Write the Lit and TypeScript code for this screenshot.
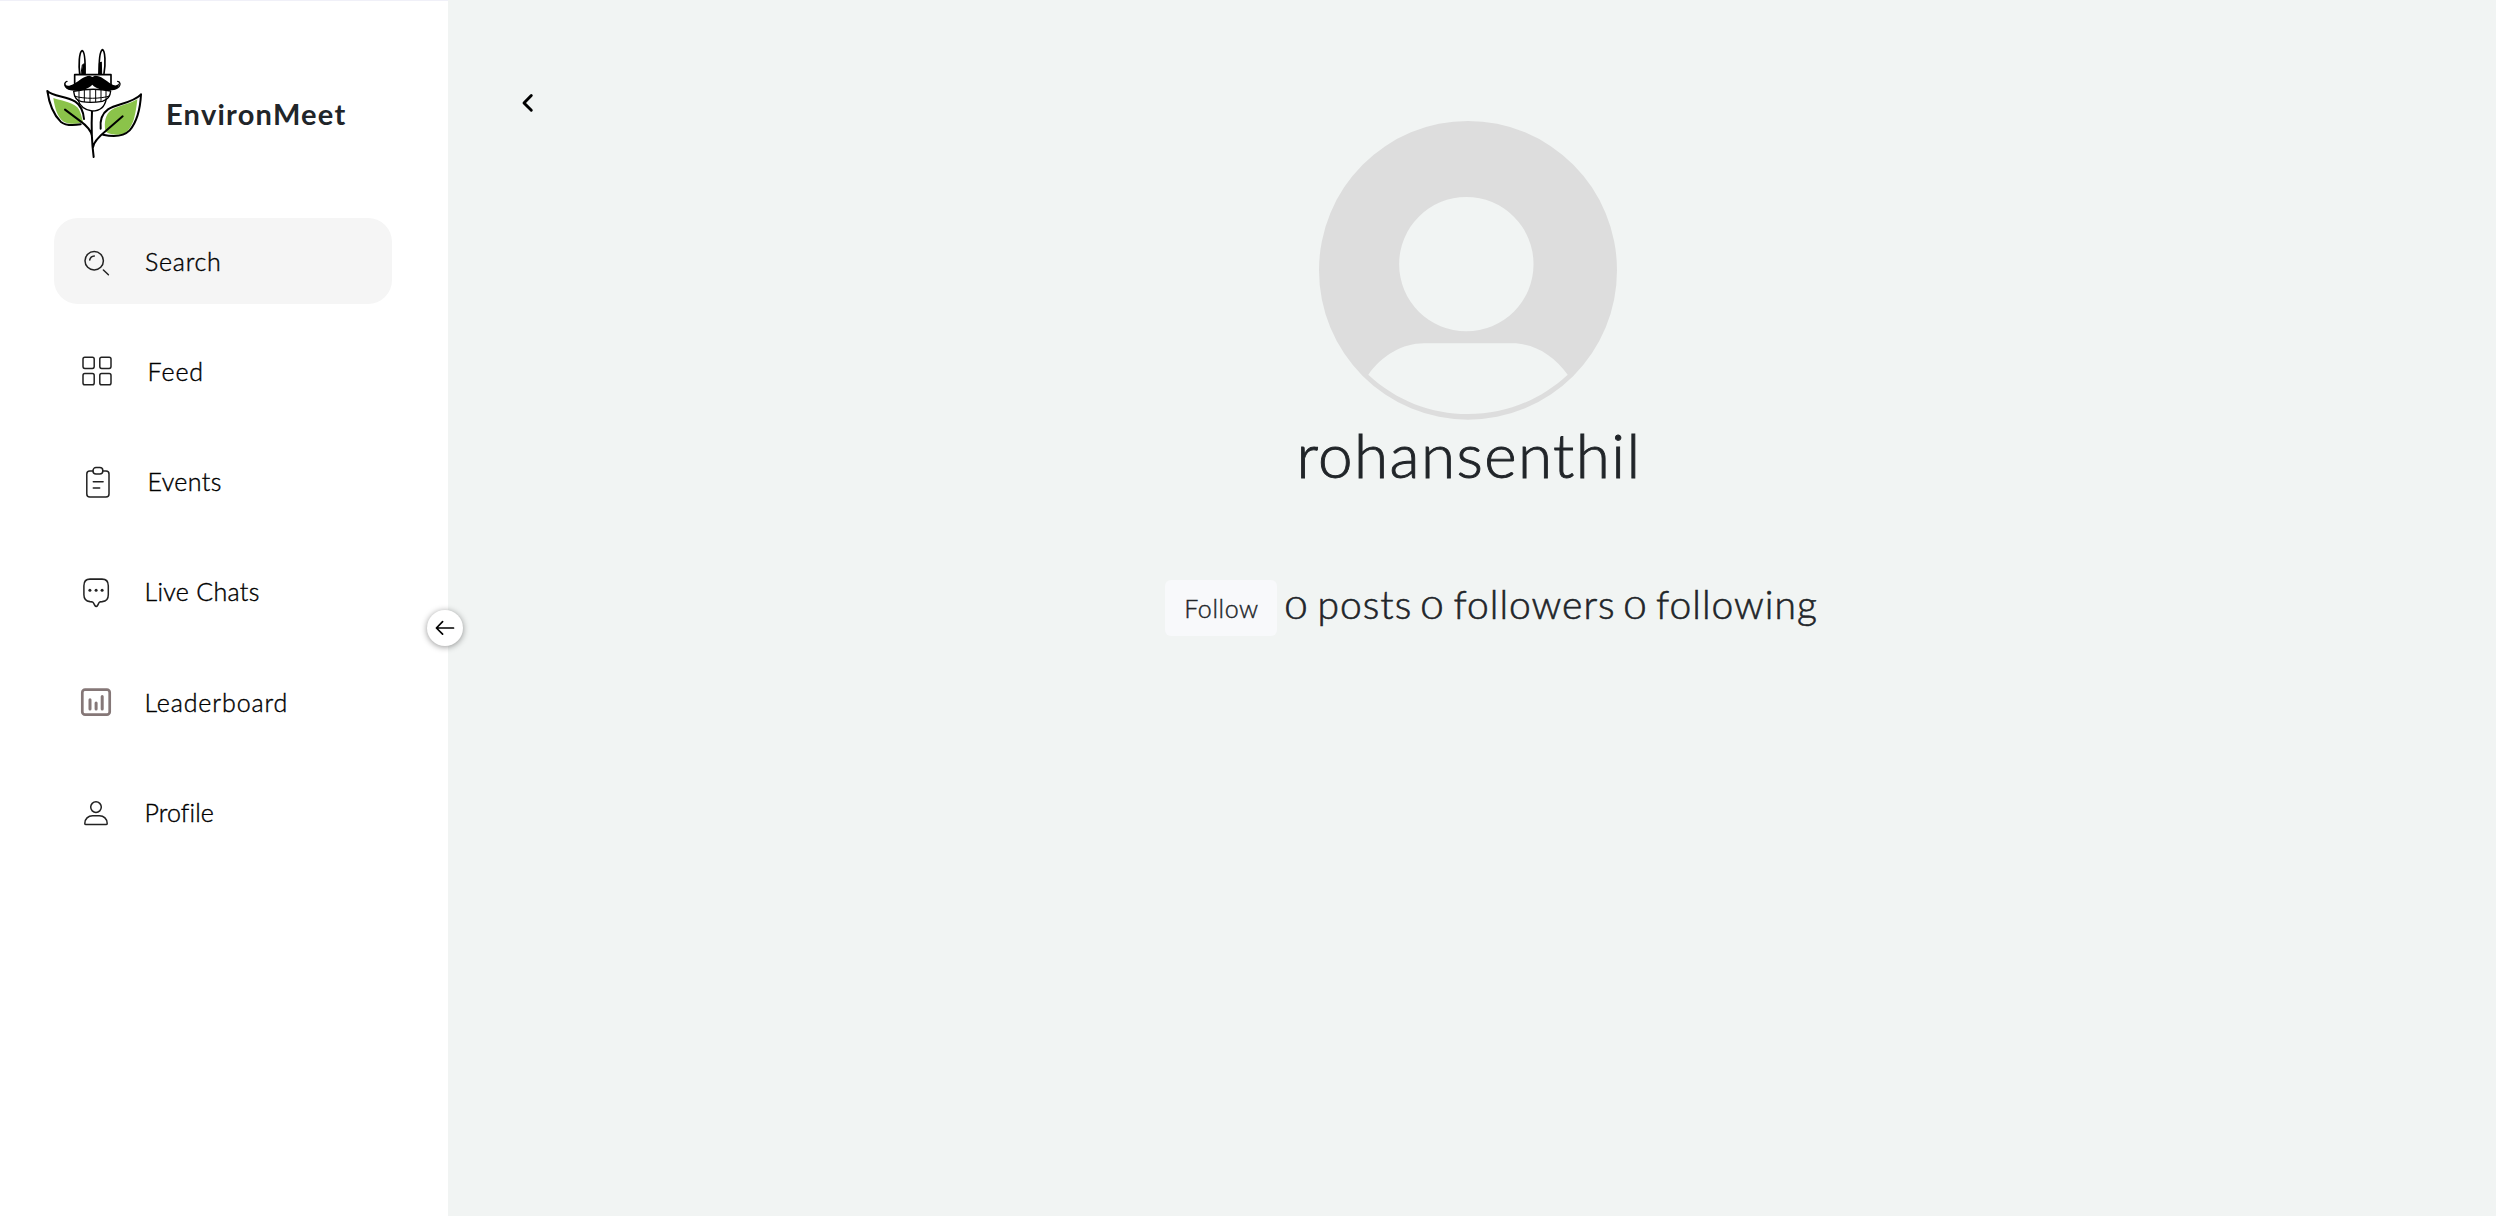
import { LitElement, html, css, svg } from "lit";
import { classMap } from "lit/directives/class-map.js";
import { styleMap } from "lit/directives/style-map.js";

const icons = {
  search: svg`<g stroke-width="1.5" transform="translate(1 -0.2)"><circle cx="19.2" cy="19" r="9.2"/><path d="M14.7 18.2a5 5 0 0 1 4.6-4M28.4 28.2l5 4.8"/></g>`,
  feed: svg`<g stroke-width="1.5" transform="translate(1.2 -0.2)"><rect x="7.8" y="5.4" width="11.2" height="11.2" rx="1.8"/><rect x="24.6" y="5.4" width="11.2" height="11.2" rx="1.8"/><rect x="7.8" y="21.8" width="11.2" height="11.2" rx="1.8"/><rect x="24.6" y="21.8" width="11.2" height="11.2" rx="1.8"/></g>`,
  events: svg`<g stroke-width="1.5" transform="translate(1.1 1)"><path d="M17.9 8.1h-3.2a3 3 0 0 0-3 3v20a3 3 0 0 0 3 3h16.2a3 3 0 0 0 3-3v-20a3 3 0 0 0-3-3h-3.2"/><rect x="17.9" y="4.6" width="9.8" height="6.5" rx="3"/><path d="M18.2 18.7h9.8M18.2 25h6.4"/></g>`,
  chats: svg`<g stroke-width="1.5" transform="translate(0 0.9) scale(1 1.06)"><path d="M16 5.9h12q6.3 0 6.3 6.3v8.4q0 6.1-6.1 6.5c-3.4 0-3 .6-4.4 3.2q-1.6 2.8-3.2 0c-1.5-2.6-1.2-3.2-4.6-3.2Q9.9 26.5 9.9 20.6v-8.4Q9.9 5.900 16 5.900z"/></g><g fill="#222" stroke="none"><circle cx="15.900" cy="18.300" r="1.500"/><circle cx="22.100" cy="18.300" r="1.500"/><circle cx="28.100" cy="18.300" r="1.500"/></g>`,
  board: svg`<g stroke="#857777"><rect x="8.300" y="6.700" width="27.400" height="25" rx="2.800" stroke-width="2.700"/><path d="M16 16.800v9.200M22.100 19.900v6.100M28.200 13.600v12.400" stroke-width="3"/></g>`,
  profile: svg`<g stroke-width="1.500" transform="translate(0 2.8)"><circle cx="22" cy="11.300" r="5.300"/><path d="M12 28.800c-.700 0-1.200-.400-1.200-1.200 0-4.400 3.400-7.700 7.800-7.700h6.800c4.400 0 7.800 3.300 7.800 7.700 0 .800-.500 1.200-1.200 1.200z"/></g>`,
};

const items = [
  { icon: icons.search, label: "Search", shift: 0.5, spacing: 0.75, active: true },
  { icon: icons.feed, label: "Feed", shift: 3, spacing: 0.9, active: false },
  { icon: icons.events, label: "Events", shift: 3, spacing: 0.4, active: false },
  { icon: icons.chats, label: "Live Chats", shift: 0, spacing: 0.3, active: false },
  { icon: icons.board, label: "Leaderboard", shift: 0, spacing: 0.88, active: false },
  { icon: icons.profile, label: "Profile", shift: 0, spacing: 0.1, active: false },
];

const stats = [
  { count: 0, label: "posts", width: 136 },
  { count: 0, label: "followers", width: 202.5 },
  { count: 0, label: "following", width: 200 },
];

class AppRoot extends LitElement {
  static styles = css`
    :host {
      display: block;
      font-family: Lato, "Open Sans", sans-serif;
      font-weight: 300;
      color: #212529;
    }
    * { box-sizing: border-box; }
    .page { display: flex; height: 1216px; background: #f1f4f3; overflow: hidden; }
    .sidebar {
      position: relative;
      flex: none;
      width: 448px;
      background: #fff;
      border-top: 1px solid #f0f0f8;
      padding: 29px 56px 0 30px;
    }
    .brand { display: flex; height: 188px; }
    .logo { width: 130px; height: 140px; flex: none; }
    .name { margin: 64px 0 0 6px; font-size: 29px; line-height: 40px; font-weight: 700; letter-spacing: 1.25px; }
    .nav { display: flex; flex-direction: column; gap: 24.7px; margin-left: 24px; }
    .item {
      display: flex;
      align-items: center;
      height: 85.5px;
      padding-left: 20px;
      border-radius: 24px;
      color: #000;
    }
    .item.active { background: #f5f5f5; }
    .icon { width: 44px; height: 44px; fill: none; stroke: #222; stroke-linecap: round; stroke-linejoin: round; flex: none; }
    .label { margin-left: 26.5px; font-size: 25px; line-height: 36px; -webkit-text-stroke: 0.4px currentColor; white-space: nowrap; }
    .toggle {
      position: absolute;
      left: 426.5px;
      top: 609px;
      width: 36px;
      height: 36px;
      border: 0;
      padding: 0;
      border-radius: 50%;
      background: #fff;
      box-shadow: 0 1px 6px rgba(0, 0, 0, 0.42);
    }
    .toggle svg { display: block; width: 36px; height: 36px; fill: none; stroke: #000; stroke-width: 1.7; stroke-linecap: round; stroke-linejoin: round; }
    .main { flex: 1; padding-top: 85px; }
    .back { display: block; width: 36px; height: 36px; margin-left: 62px; fill: none; stroke: #000; stroke-width: 2.9; stroke-linecap: round; stroke-linejoin: round; }
    .avatar { display: block; width: 300px; height: 300px; margin: -1px 0 0 870px; }
    .user { margin: -2px 0 0 848.5px; font-size: 62px; line-height: 72px; font-weight: 300; letter-spacing: 1.4px; -webkit-text-stroke: 0.9px currentColor; }
    .row { display: flex; align-items: flex-start; margin: 90px 0 0 717px; }
    .follow {
      width: 112px;
      height: 56px;
      border: 0;
      border-radius: 6px;
      padding: 0 0 0 1px;
      background: #f8f9fb;
      color: #212529;
      font: 300 25px/56px Lato, sans-serif;
      letter-spacing: 0.6px;
      -webkit-text-stroke: 0.4px currentColor;
    }
    .stats { display: flex; margin-left: 8px; }
    .stat { display: flex; align-items: baseline; font-size: 39px; line-height: 48px; letter-spacing: 1px; -webkit-text-stroke: 0.6px currentColor; }
    .count { display: block; width: 32.5px; font-size: 31.5px; letter-spacing: 0; transform: scaleX(1.2); transform-origin: 0 50%; }
  `;

  render() {
    return html`
      <div class="page">
        <aside class="sidebar">
          <div class="brand">
            <svg class="logo" viewBox="0 0 390 420" fill="none" stroke="#000" stroke-width="6" stroke-linecap="round" stroke-linejoin="round">
              <g fill="#8bc34a" stroke="none">
                <path d="M70 204c22 8 52 10 72 28 10 12 13 30 17 44-14 7-40 8-58-1-20-14-27-44-31-71z"/>
                <path d="M322 208c-22 14-55 18-78 32-18 12-22 38-18 62 4 8 20 12 44 12 20-1 34-22 42-48 5-18 8-38 10-58z"/>
              </g>
              <path d="M52 183c6 42 22 74 40 92 12 10 36 12 60 8M52 183c18 18 58 14 84 32 18 12 24 32 26 52"/>
              <path d="M333 193c-24 26-72 28-99 45-20 14-24 38-22 58M333 193c-2 38-12 82-34 108-20 20-48 20-80 13"/>
              <path d="M105 239l44 33c20 14 34 30 37 46M278 259l-50 43c-22 18-38 36-39 50M186 244c-2 42-1 92 5 137"/>
              <path d="M143 208c8 24 22 33 43 35 24 0 39-12 43-38" fill="#fff" stroke-width="4"/>
              <path d="M131 184c2 20 12 29 24 31q28 5 62-1c13-4 24-14 25-31q-54-11-111 1z" fill="#fff" stroke-width="4"/>
              <path d="M135 199c28 8 76 8 104-1M147 182v29M163 180v35M180 179v36M197 179v36M213 180v34M228 182v27" stroke-width="3"/>
              <path d="M134 169v-35h109v35" stroke-width="5"/>
              <path d="M149 131c-3-25-2-64 7-69 9 2 10 35 9 69M208 131c-1-30 0-65 9-72 9 2 10 44 5 72" stroke-width="5"/>
              <path d="M158 104l5-3 2 32h-11zM209 99l5-3 1 36h-8z" fill="#000" stroke-width="3"/>
              <path d="M103 157c4 14 14 12 28 5 20-12 30-24 48-25l8 4 8-4c18 0 31 13 48 25 12 7 23 5 25-5-1 20-12 25-32 24-20 0-38-5-49-17-12 13-31 18-51 18-22 0-34-5-33-25z" fill="#000" stroke="none"/>
              <path d="M111 154c-7 2-9 10-3 17 8 8 20 8 30 7M263 154c8 1 9 11 4 16-6 8-17 9-28 8" stroke-width="4"/>
            </svg>
            <div class="name">EnvironMeet</div>
          </div>
          <nav class="nav">
            ${items.map(
              (i) => html`<div class=${classMap({ item: true, active: i.active })}>
                <svg class="icon" viewBox="0 0 44 38">${i.icon}</svg>
                <span class="label" style=${styleMap({ letterSpacing: `${i.spacing}px`, paddingLeft: `${i.shift}px` })}>${i.label}</span>
              </div>`
            )}
          </nav>
          <button class="toggle" aria-label="Collapse">
            <svg viewBox="0 0 36 36"><path d="M9.6 18H26.5M15.6 11.7L9.4 18l6.2 6.2"/></svg>
          </button>
        </aside>
        <main class="main">
          <svg class="back" viewBox="0 0 36 36"><path d="M21.3 10.5L14 18l7.3 7.3"/></svg>
          <svg class="avatar" viewBox="114 57 900 900">
            <path fill="#ddd" fill-rule="evenodd" d="M564 60a447 448 0 1 1 0 896a447 448 0 1 1 0-896zM559 288a201.5 201.5 0 1 0 0 403a201.5 201.5 0 1 0 0-403zM265 821C349 899 453 939 564 939S779 899 863 821C821 763 763 727 698 727H432C368 727 306 763 265 821z"/>
          </svg>
          <h1 class="user">rohansenthil</h1>
          <div class="row">
            <button class="follow">Follow</button>
            <div class="stats">
              ${stats.map(
                (s) => html`<div class="stat" style=${styleMap({ width: `${s.width}px` })}>
                  <span class="count">${s.count}</span><span>${s.label}</span>
                </div>`
              )}
            </div>
          </div>
        </main>
      </div>
    `;
  }
}
customElements.define("app-root", AppRoot);
